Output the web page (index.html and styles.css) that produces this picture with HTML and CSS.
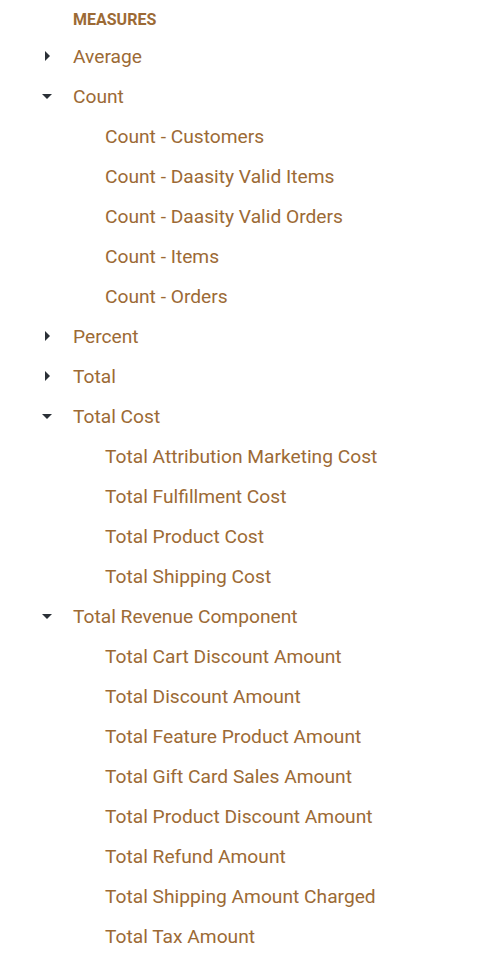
FILE: index.html
```html
<!DOCTYPE html>
<html>
<head>
<meta charset="utf-8">
<link rel="stylesheet" href="styles.css">
</head>
<body>
<div class="tree">
  <div class="header">MEASURES</div>
  <div class="row"><svg class="icon" viewBox="0 0 24 24"><path d="M10 17l5-5-5-5v10z"/></svg><span class="label">Average</span></div>
  <div class="row"><svg class="icon" viewBox="0 0 24 24"><path d="M7 10l5 5 5-5z"/></svg><span class="label">Count</span></div>
  <div class="row child"><span class="label">Count - Customers</span></div>
  <div class="row child"><span class="label">Count - Daasity Valid Items</span></div>
  <div class="row child"><span class="label">Count - Daasity Valid Orders</span></div>
  <div class="row child"><span class="label">Count - Items</span></div>
  <div class="row child"><span class="label">Count - Orders</span></div>
  <div class="row"><svg class="icon" viewBox="0 0 24 24"><path d="M10 17l5-5-5-5v10z"/></svg><span class="label">Percent</span></div>
  <div class="row"><svg class="icon" viewBox="0 0 24 24"><path d="M10 17l5-5-5-5v10z"/></svg><span class="label">Total</span></div>
  <div class="row"><svg class="icon" viewBox="0 0 24 24"><path d="M7 10l5 5 5-5z"/></svg><span class="label">Total Cost</span></div>
  <div class="row child"><span class="label">Total Attribution Marketing Cost</span></div>
  <div class="row child"><span class="label">Total Fulfillment Cost</span></div>
  <div class="row child"><span class="label">Total Product Cost</span></div>
  <div class="row child"><span class="label">Total Shipping Cost</span></div>
  <div class="row"><svg class="icon" viewBox="0 0 24 24"><path d="M7 10l5 5 5-5z"/></svg><span class="label">Total Revenue Component</span></div>
  <div class="row child"><span class="label">Total Cart Discount Amount</span></div>
  <div class="row child"><span class="label">Total Discount Amount</span></div>
  <div class="row child"><span class="label">Total Feature Product Amount</span></div>
  <div class="row child"><span class="label">Total Gift Card Sales Amount</span></div>
  <div class="row child"><span class="label">Total Product Discount Amount</span></div>
  <div class="row child"><span class="label">Total Refund Amount</span></div>
  <div class="row child"><span class="label">Total Shipping Amount Charged</span></div>
  <div class="row child"><span class="label">Total Tax Amount</span></div>
</div>
</body>
</html>
```
FILE: styles.css
```css
html, body {
  margin: 0;
  padding: 0;
  background: #ffffff;
}
body {
  font-family: Roboto, "Liberation Sans", sans-serif;
  color: #9c6a35;
}
.tree {
  padding-top: 3px;
  padding-left: 35px;
}
.header {
  height: 33px;
  line-height: 33px;
  padding-left: 38px;
  font-size: 16px;
  font-weight: 700;
}
.row {
  height: 40px;
  display: flex;
  align-items: center;
  gap: 14px;
  font-size: 19.2px;
}
.row.child {
  padding-left: 70px;
}
.icon {
  width: 24px;
  height: 24px;
  fill: #2b3037;
  flex: none;
}
.label {
  white-space: nowrap;
}
```
